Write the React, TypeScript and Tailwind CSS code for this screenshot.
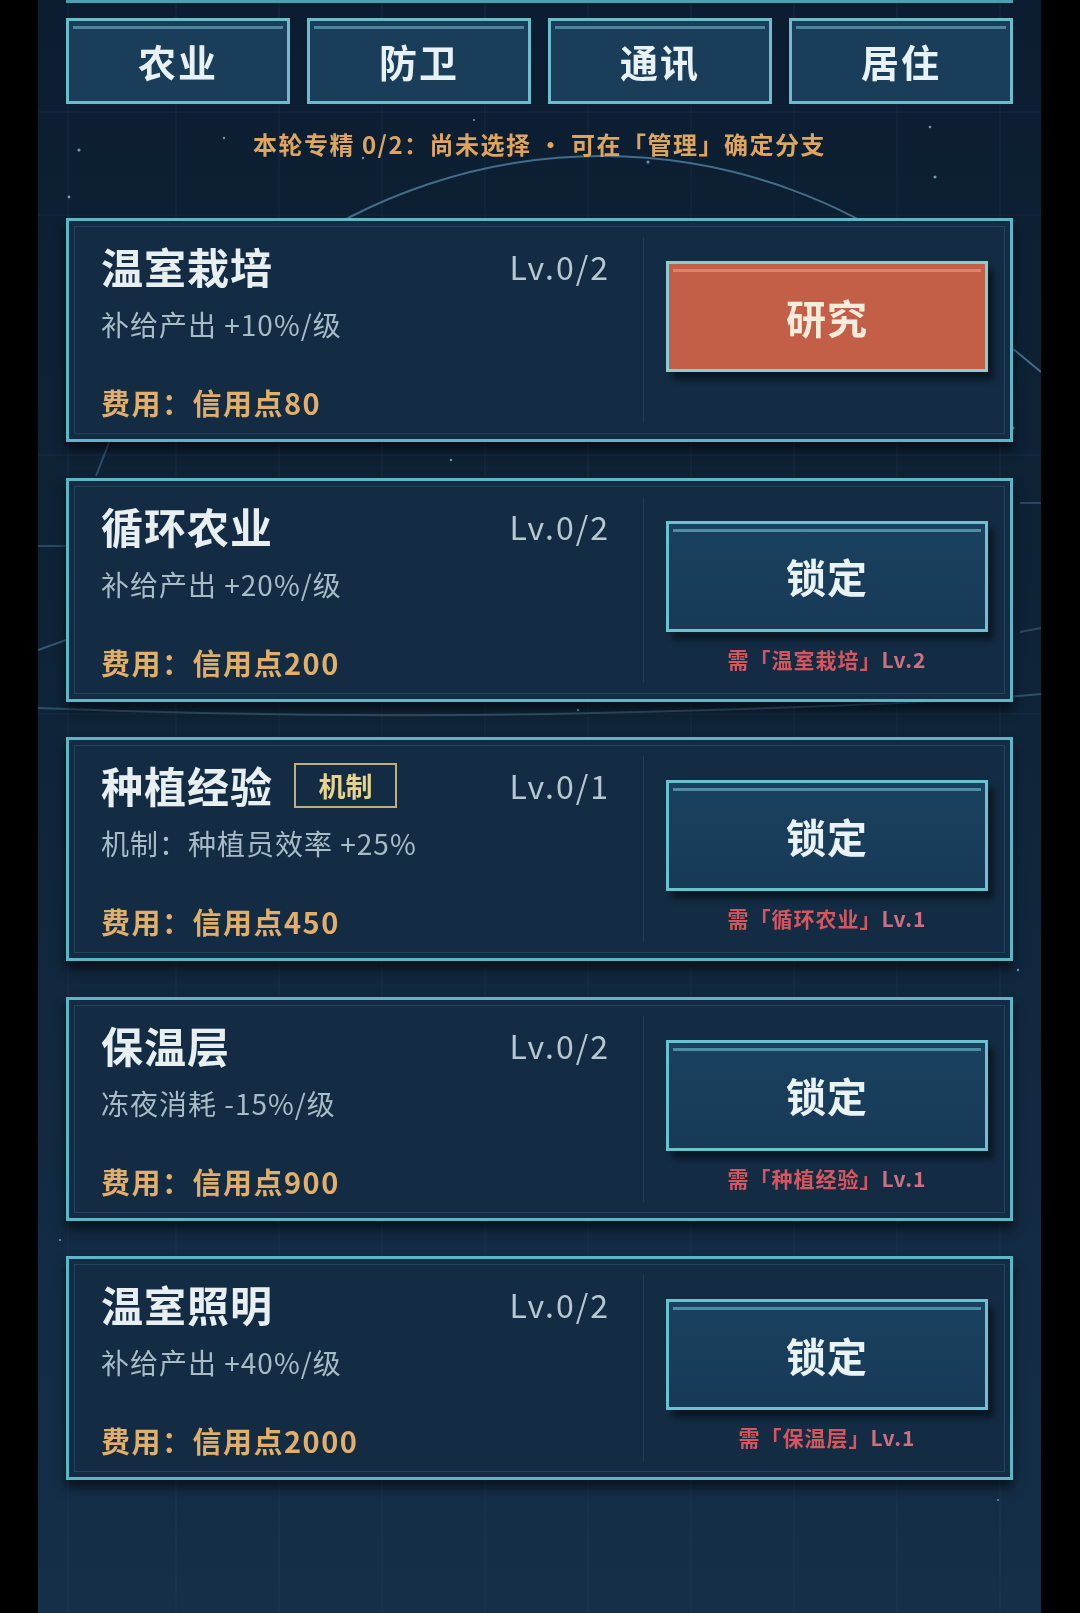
import React from "react";

type Item = {
  title: string;
  tag?: string;
  lv: string;
  desc: string;
  cost: string;
  research?: boolean;
  req?: { name: string; lv: string };
};

const items: Item[] = [
  { title: "温室栽培", lv: "Lv.0/2", desc: "补给产出 +10%/级", cost: "费用：信用点80", research: true },
  { title: "循环农业", lv: "Lv.0/2", desc: "补给产出 +20%/级", cost: "费用：信用点200", req: { name: "温室栽培", lv: "Lv.2" } },
  { title: "种植经验", tag: "机制", lv: "Lv.0/1", desc: "机制：种植员效率 +25%", cost: "费用：信用点450", req: { name: "循环农业", lv: "Lv.1" } },
  { title: "保温层", lv: "Lv.0/2", desc: "冻夜消耗 -15%/级", cost: "费用：信用点900", req: { name: "种植经验", lv: "Lv.1" } },
  { title: "温室照明", lv: "Lv.0/2", desc: "补给产出 +40%/级", cost: "费用：信用点2000", req: { name: "保温层", lv: "Lv.1" } },
];

const tabs = ["农业", "防卫", "通讯", "居住"];

function Decor() {
  const stars: [number, number, number][] = [
    [41, 150, 1.6], [31, 197, 1.4], [186, 138, 1.2], [325, 158, 1.2], [610, 162, 1.5],
    [897, 177, 1.6], [892, 127, 1.3], [436, 120, 1.1], [975, 428, 1.6], [413, 460, 1.2],
    [540, 710, 1.2], [980, 970, 1.2], [22, 1240, 1.1], [960, 1500, 1.0],
  ];
  return (
    <svg className="absolute inset-0" width="1003" height="1613" viewBox="0 0 1003 1613">
      <g stroke="#2a4a63" strokeWidth="1" opacity="0.3">
        <line x1="30" y1="0" x2="30" y2="1613" />
        <line x1="138" y1="0" x2="138" y2="1613" />
        <line x1="241" y1="0" x2="241" y2="1613" />
        <line x1="344" y1="0" x2="344" y2="1613" />
        <line x1="447" y1="0" x2="447" y2="1613" />
        <line x1="550" y1="0" x2="550" y2="1613" />
        <line x1="653" y1="0" x2="653" y2="1613" />
        <line x1="756" y1="0" x2="756" y2="1613" />
        <line x1="859" y1="0" x2="859" y2="1613" />
        <line x1="962" y1="0" x2="962" y2="1613" />
        <line x1="0" y1="112" x2="1003" y2="112" />
        <line x1="0" y1="215" x2="1003" y2="215" />
        <line x1="0" y1="455" x2="1003" y2="455" />
        <line x1="0" y1="714" x2="1003" y2="714" />
      </g>
      <g fill="none" stroke="#5d8fab" strokeWidth="2" opacity="0.7">
        <path d="M242 260 A551 551 0 0 1 886 260" />
        <path d="M0 708 Q 300 720 600 712 T 1003 694" opacity="0.6" />
        <path d="M962 338 L1003 372" />
        <path d="M72 440 L58 476" opacity="0.6" />
        <path d="M0 546 L28 546" opacity="0.5" />
        <path d="M0 650 L28 640" opacity="0.7" />
        <path d="M982 503 L1003 503" opacity="0.5" />
        <path d="M982 632 L1003 628" opacity="0.5" />
      </g>
      <g fill="#8fb7c9" opacity="0.8">
        {stars.map(([x, y, r], i) => (
          <circle key={i} cx={x} cy={y} r={r} />
        ))}
      </g>
    </svg>
  );
}

function Card({ it }: { it: Item }) {
  return (
    <div className="h-[224px] border-[3px] border-[#5cb6c6] bg-[#132c44] p-[5px] shadow-[0_8px_10px_rgba(0,0,0,0.55)]">
      <div className="flex h-full border border-[#22435b]">
        <div className="flex w-[568px] flex-col pl-[26px] pr-[33px] pt-[15px]">
          <div className="flex h-[48px] items-center justify-between">
            <div className="flex items-center">
              <span className="text-[42px] font-bold leading-[48px] tracking-[1px] text-[#e7eff1]">{it.title}</span>
              {it.tag && (
                <span className="ml-[21px] flex h-[45px] w-[103px] items-center justify-center border-2 border-[#bfae7c] text-[27px] font-bold leading-none text-[#e8d38c]">
                  {it.tag}
                </span>
              )}
            </div>
            <span className="text-[32px] leading-none tracking-[2px] text-[#b7c8d1]">{it.lv}</span>
          </div>
          <div className="mt-[16px] h-[36px] text-[28px] leading-[36px] tracking-[1px] text-[#a7bcc7]">{it.desc}</div>
          <div className="mt-[42px] h-[36px] text-[29px] font-bold leading-[36px] tracking-[1.5px] text-[#e2af6a]">{it.cost}</div>
        </div>
        <div className="my-[10px] w-px bg-[#1f3d54]" />
        <div className="flex flex-1 flex-col pl-[22px] pr-[16px]">
          {it.research ? (
            <div className="relative mt-[34px] flex h-[111px] items-center justify-center border-[3px] border-[#8ecbcf] bg-[#c35f46] shadow-[6px_8px_6px_rgba(0,0,0,0.45)]">
              <div className="absolute left-[4px] right-[4px] top-[5px] h-[3px] bg-[#dd8369]" />
              <span className="text-[40px] font-bold leading-none tracking-[1px] text-[#f6ecdb]">研究</span>
            </div>
          ) : (
            <div className="relative mt-[34px] flex h-[111px] items-center justify-center border-[3px] border-[#69c2cf] bg-[linear-gradient(180deg,#1a4160,#173a56)] shadow-[6px_8px_6px_rgba(0,0,0,0.45)]">
              <div className="absolute left-[4px] right-[4px] top-[5px] h-[3px] bg-[#4f8ea2]" />
              <span className="text-[40px] font-bold leading-none tracking-[1px] text-[#eaf3f4]">锁定</span>
            </div>
          )}
          {it.req && (
            <div className="mt-[13px] h-[28px] text-center text-[21px] font-bold leading-[28px] tracking-[1px] text-[#d6565f]">
              需「{it.req.name}」<span className="text-[#cf6f82]">{it.req.lv}</span>
            </div>
          )}
        </div>
      </div>
    </div>
  );
}

export default function App() {
  return (
    <div className="flex h-[1613px] w-[1080px] bg-black font-['Noto_Sans_CJK_SC','Noto_Sans',sans-serif]">
      <div className="w-[38px]" />
      <div className="relative h-full w-[1003px] overflow-hidden bg-[linear-gradient(180deg,#0c1d31_0%,#0f2438_45%,#132b44_80%,#152f48_100%)]">
        <Decor />
        <div className="relative px-[28px]">
          <div className="h-[3px] bg-[#4e9fb0]" />
          <div className="mt-[15px] grid grid-cols-4 gap-[17px]">
            {tabs.map((t) => (
              <div
                key={t}
                className="relative flex h-[86px] items-center justify-center border-[3px] border-[#6cbccb] bg-[#1a3e59]"
              >
                <div className="absolute left-[4px] right-[4px] top-[5px] h-[3px] bg-[#4a8799]" />
                <span className="text-[38px] font-bold leading-none tracking-[2px] text-[#e8f2f4]">{t}</span>
              </div>
            ))}
          </div>
          <div className="h-[114px] pt-[26px] text-center text-[24px] font-bold leading-[28px] tracking-[1.5px] text-[#dea55f]">
            本轮专精 0/2：尚未选择 · 可在「管理」确定分支
          </div>
          <div className="flex flex-col gap-[35.5px]">
            {items.map((it) => (
              <Card key={it.title} it={it} />
            ))}
          </div>
        </div>
      </div>
      <div className="flex-1" />
    </div>
  );
}
